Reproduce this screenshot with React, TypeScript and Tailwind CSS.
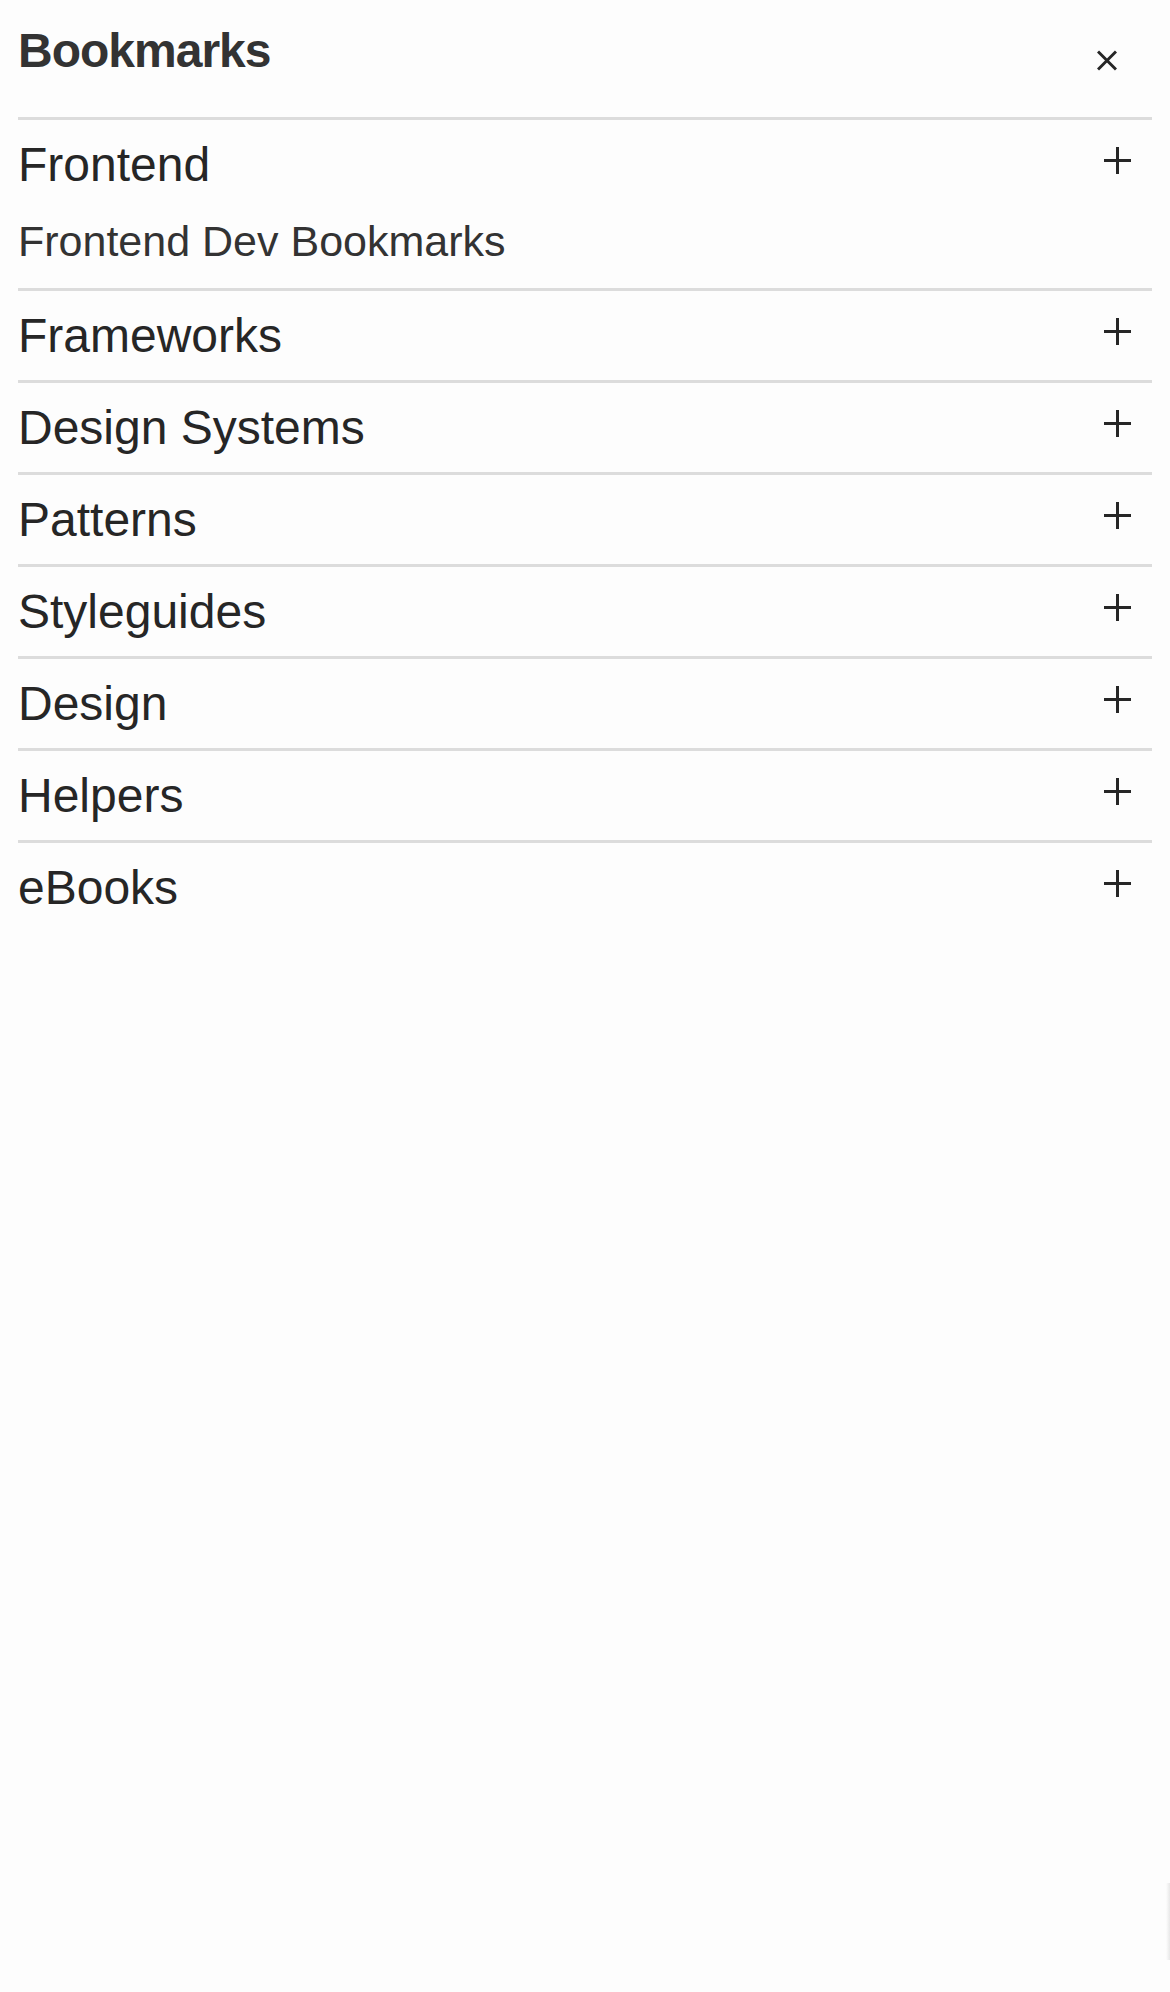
import React from 'react';

const sections = [
  { title: 'Frontend', subtitle: 'Frontend Dev Bookmarks' },
  { title: 'Frameworks' },
  { title: 'Design Systems' },
  { title: 'Patterns' },
  { title: 'Styleguides' },
  { title: 'Design' },
  { title: 'Helpers' },
  { title: 'eBooks' },
];

const PlusIcon = () => (
  <svg width="27" height="27" viewBox="0 0 27 27" className="shrink-0">
    <path d="M13.5 0v27M0 13.5h27" stroke="#262626" strokeWidth="3" fill="none" />
  </svg>
);

const CloseIcon = () => (
  <svg width="20" height="21" viewBox="0 0 20 21">
    <path d="M1 1.5l18 18M19 1.5l-18 18" stroke="#262626" strokeWidth="3" fill="none" />
  </svg>
);

export default function App() {
  return (
    <div
      className="min-h-[1992px] w-full bg-[#fdfdfd] px-[18px] text-[#262626] relative"
      style={{ fontFamily: '"Liberation Sans", Arial, sans-serif' }}
    >
      {/* Header */}
      <div className="flex items-start justify-between h-[120px] pt-[24px] border-b-[3px] border-[#dcdcdc]">
        <h1 className="text-[48px] leading-[54px] font-bold tracking-[-1px] text-[#333]">Bookmarks</h1>
        <button className="mt-[26px] mr-[35px]">
          <CloseIcon />
        </button>
      </div>

      {/* Sections */}
      <div className="flex flex-col">
        {sections.map((s, i) => (
          <div
            key={s.title}
            className={`pt-[18px] pb-[17px] ${i < sections.length - 1 ? 'border-b-[3px] border-[#dcdcdc]' : ''}`}
          >
            <div className="flex items-start justify-between">
              <span className="text-[48px] leading-[54px]">{s.title}</span>
              <span className="mt-[9px] mr-[21px]">
                <PlusIcon />
              </span>
            </div>
            {s.subtitle && (
              <div className="mt-[26px] mb-[6px] text-[43px] leading-[47px] text-[#333]">{s.subtitle}</div>
            )}
          </div>
        ))}
      </div>

      {/* faint edge shadow */}
      <div className="absolute right-0 top-[1883px] h-[77px] w-[4px] bg-gradient-to-r from-transparent to-[#e8e8e8]" />
    </div>
  );
}
